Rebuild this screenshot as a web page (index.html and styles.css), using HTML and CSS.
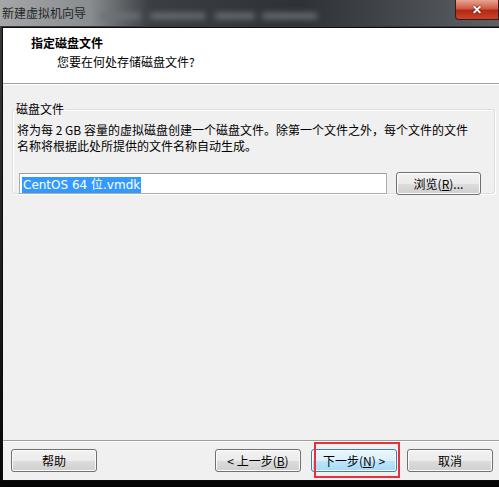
FILE: index.html
```html
<!DOCTYPE html>
<html lang="zh-CN">
<head>
	<meta charset="UTF-8">
	<title>新建虚拟机向导</title>
	<link rel="stylesheet" href="styles.css">
</head>
<body>

<div class="window">
	<!-- caption bar -->
	<div class="titlebar">
		<span class="title">新建虚拟机向导</span>
		<span class="blur b1"></span>
		<span class="blur b2"></span>
		<span class="blur b3"></span>
		<span class="blur b4"></span>
		<button class="close">&#x2715;</button>
	</div>

	<div class="client">
		<div class="header">
			<div class="heading">指定磁盘文件</div>
			<div class="subheading">您要在何处存储磁盘文件?</div>
		</div>

		<div class="page">
			<fieldset class="group">
				<legend>磁盘文件</legend>
				<p class="note">将为每 2 GB 容量的虚拟磁盘创建一个磁盘文件。除第一个文件之外，每个文件的文件<br>名称将根据此处所提供的文件名称自动生成。</p>
				<div class="file-row">
					<div class="edit"><span class="sel">CentOS 64 位.vmdk</span></div>
					<button class="btn browse">浏览(<u>R</u>)...</button>
				</div>
			</fieldset>
		</div>

		<div class="footer">
			<button class="btn">帮助</button>
			<div class="spacer"></div>
			<button class="btn">&lt; 上一步(<u>B</u>)</button>
			<button class="btn hot">下一步(<u>N</u>) &gt;</button>
			<button class="btn">取消</button>
		</div>
	</div>
</div>

</body>
</html>
```

FILE: styles.css
```css
html, body {
	margin: 0;
	padding: 0;
	background: #111;
}

body {
	font-family: "Noto Sans CJK SC", "DejaVu Sans", sans-serif;
	font-size: 12px;
	color: #000;
}

.window {
	width: 499px;
	height: 487px;
	display: flex;
	flex-direction: column;
	background: linear-gradient(#3a3c3f, #1a1b1c 60%, #050505);
	overflow: hidden;
}

/* caption */
.titlebar {
	position: relative;
	height: 26px;
	flex: none;
	background: linear-gradient(90deg, #a4a6a8 0, #8a8d90 18%, #3b3e42 30%, #2e3135 60%, #4a4d51 85%, #5e6266 100%);
}

.title {
	position: absolute;
	left: 2px;
	top: 4px;
	font-size: 12px;
	color: #262626;
}

.blur {
	position: absolute;
	top: 13px;
	height: 6px;
	background: #6d7176;
	filter: blur(3px);
}
.b1 { left: 100px; width: 40px; }
.b2 { left: 150px; width: 55px; }
.b3 { left: 215px; width: 40px; }
.b4 { left: 262px; width: 55px; }

.close {
	position: absolute;
	right: 0;
	top: 0;
	width: 44px;
	height: 20px;
	margin: 0;
	padding: 0;
	border: 1px solid #3a1a16;
	border-top: 0;
	border-radius: 0 0 0 4px;
	background: linear-gradient(#e6a493, #cf5a43 45%, #b22a14 55%, #c9432c);
	color: #fff;
	font-size: 12px;
	font-weight: bold;
	line-height: 18px;
	text-shadow: 0 0 2px #400;
}

/* dialog body */
.client {
	flex: 1;
	display: flex;
	flex-direction: column;
	margin: 1px 0 6px 2px;
	border: 1px solid #0c0c0c;
	border-right: 0;
	background: #f0f0f0;
}

.header {
	height: 56px;
	flex: none;
	background: #fff;
	border-bottom: 1px solid #a0a0a0;
	box-shadow: 0 1px 0 #fff;
	padding: 6px 0 0 28px;
	box-sizing: border-box;
}

.heading {
	font-weight: bold;
	line-height: 18px;
}

.subheading {
	padding-left: 26px;
	line-height: 18px;
	margin-top: 1px;
}

.page {
	flex: 1;
	padding: 18px 4px 0 9px;
}

.group {
	margin: 0;
	padding: 2px 9px 0 4px;
	height: 92px;
	box-sizing: border-box;
	border: 1px solid #d5dfe5;
	border-radius: 3px;
	box-shadow: inset 1px 1px 0 #fff, 1px 1px 0 #fff;
}

.group legend {
	padding: 0 2px 0 1px;
	margin-left: -2px;
	line-height: 14px;
}

.note {
	margin: 4px 0 0 0;
	line-height: 16px;
}

.file-row {
	display: flex;
	align-items: center;
	margin-top: 18px;
}

.edit {
	width: 368px;
	height: 21px;
	box-sizing: border-box;
	border: 1px solid #abadb3;
	border-top-color: #9c9fa6;
	background: #fff;
	padding: 1px 0 0 2px;
	margin-left: 2px;
}

.sel {
	display: inline-block;
	background: #3399ff;
	color: #fff;
	font-family: "DejaVu Sans", sans-serif;
	font-size: 12px;
	line-height: 16px;
	padding: 0 1px;
}

.btn {
	font-family: "Noto Sans CJK SC", sans-serif;
	font-size: 12px;
	width: 86px;
	height: 23px;
	padding: 0;
	margin: 0;
	border: 1px solid #707070;
	border-radius: 3px;
	background: linear-gradient(#f2f2f2, #ebebeb 50%, #dddddd 51%, #cfcfcf);
	box-shadow: inset 0 0 0 1px #fcfcfc;
	color: #000;
}

.browse {
	width: 85px;
	margin-left: 9px;
}

/* wizard buttons */
.footer {
	flex: none;
	height: 39px;
	display: flex;
	align-items: center;
	gap: 10px;
	padding: 0 6px 0 8px;
	border-top: 1px solid #a0a0a0;
	box-shadow: inset 0 1px 0 #fff;
}

.footer .spacer {
	flex: 1;
}

.hot {
	position: relative;
	border-color: #3c7fb1;
	background: linear-gradient(#eaf6fd, #d9f0fc 50%, #bee6fd 51%, #a7d9f5);
}

.hot::after {
	content: "";
	position: absolute;
	left: 2px;
	right: -4px;
	top: -8px;
	bottom: -7px;
	border: 2px solid #e8303a;
}
```
